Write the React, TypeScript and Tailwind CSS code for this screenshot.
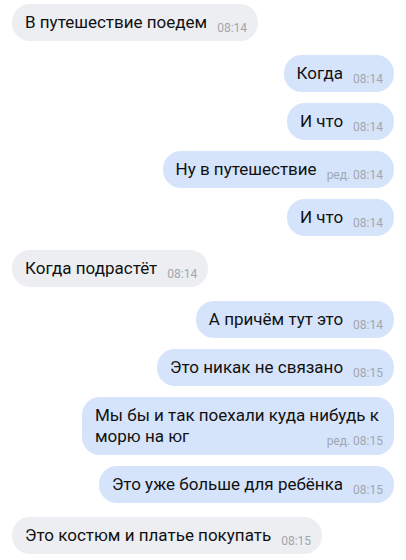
type Msg = {
  text: string;
  time: string;
  out: boolean;
  edited?: boolean;
  wrap?: boolean;
};

const messages: Msg[] = [
  { text: "В путешествие поедем", time: "08:14", out: false },
  { text: "Когда", time: "08:14", out: true },
  { text: "И что", time: "08:14", out: true },
  { text: "Ну в путешествие", time: "08:14", out: true, edited: true },
  { text: "И что", time: "08:14", out: true },
  { text: "Когда подрастёт", time: "08:14", out: false },
  { text: "А причём тут это", time: "08:14", out: true },
  { text: "Это никак не связано", time: "08:15", out: true },
  { text: "Мы бы и так поехали куда нибудь к морю на юг", time: "08:15", out: true, edited: true, wrap: true },
  { text: "Это уже больше для ребёнка", time: "08:15", out: true },
  { text: "Это костюм и платье покупать", time: "08:15", out: false },
];

function Bubble({ m }: { m: Msg }) {
  const bg = m.out ? "bg-[#d5e4fb]" : "bg-[#eceef1]";
  const time = (m.edited ? "ред. " : "") + m.time;

  if (m.wrap) {
    // time floats onto the last line of wrapped text
    return (
      <div className={`${bg} max-w-[312px] rounded-[18px] pl-[13px] pr-[11px] py-2 text-[17px] leading-[21px] text-[#111]`}>
        <span>{m.text}</span>
        <span className="float-right mt-[9px] ml-2.5 text-[12px] leading-none text-[#a1a6ae]">{time}</span>
      </div>
    );
  }

  return (
    <div className={`${bg} flex items-baseline rounded-[18px] pl-[13px] pr-[11px] py-2 text-[17px] leading-[21px] text-[#111]`}>
      <span>{m.text}</span>
      <span className="ml-2.5 translate-y-1 text-[12px] leading-none text-[#a1a6ae]">{time}</span>
    </div>
  );
}

export default function App() {
  return (
    <div className="w-[406px] h-[560px] bg-white px-3 pt-1 overflow-hidden font-['Roboto',sans-serif]">
      <div className="flex flex-col">
        {messages.map((m, i) => {
          const prev = messages[i - 1];
          const gap = !prev ? "" : prev.out === m.out ? "mt-[11px]" : "mt-3.5";
          return (
            <div key={i} className={`flex ${m.out ? "justify-end" : "justify-start"} ${gap}`}>
              <Bubble m={m} />
            </div>
          );
        })}
      </div>
    </div>
  );
}
